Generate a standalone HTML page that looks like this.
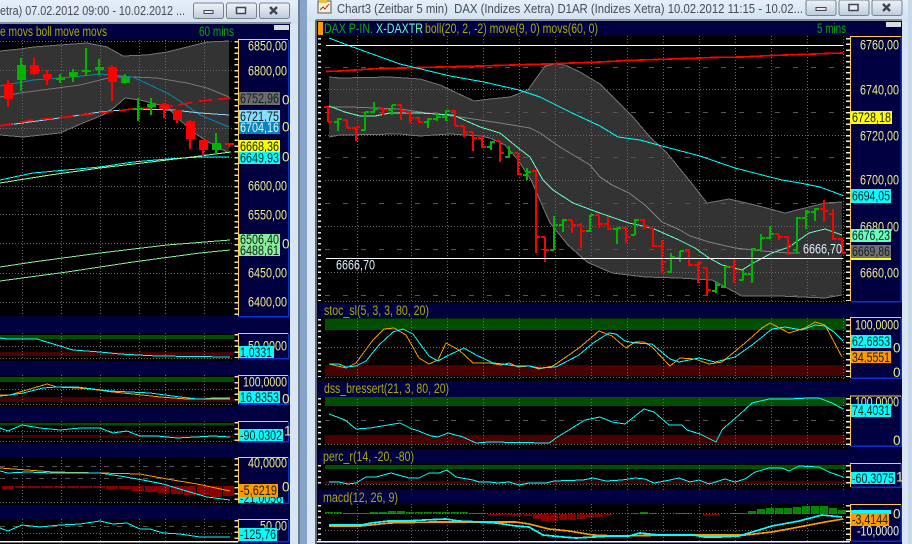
<!DOCTYPE html>
<html><head><meta charset="utf-8"><style>
html,body{margin:0;padding:0;background:#d8e6f4;width:912px;height:544px;overflow:hidden}
svg{display:block}
path{shape-rendering:crispEdges}
text{font-family:"Liberation Sans",Arial,sans-serif;font-size:13.5px;white-space:pre}
.a{fill:#eeee88}.d{fill:#102020}.t{fill:#444c55;font-size:13px}.o{fill:#aaaa00}.g{fill:#00aa00}
.l{fill:none;stroke-width:1}
.w{stroke-width:1.7}
.c{stroke:#00ffff}.r{stroke:#ff9900}.m{stroke:#66ffbb}
</style></head><body>
<svg width="912" height="544" viewBox="0 0 912 544" xmlns="http://www.w3.org/2000/svg">
<defs>
<linearGradient id="tb" x1="0" y1="0" x2="0" y2="1"><stop offset="0" stop-color="#e6eff9"/><stop offset="1" stop-color="#d2e0ef"/></linearGradient>
<linearGradient id="bt" x1="0" y1="0" x2="0" y2="1"><stop offset="0" stop-color="#eef2f7"/><stop offset=".5" stop-color="#d8e0e9"/><stop offset="1" stop-color="#bccbd9"/></linearGradient>
</defs>
<!-- frames -->
<rect width="912" height="544" fill="#d8e6f4"/>
<rect x="0" y="0" width="298" height="24" fill="url(#tb)"/>
<rect x="298" y="0" width="2" height="544" fill="#6d7f92"/>
<rect x="300" y="0" width="7" height="544" fill="#86a4c8"/>
<rect x="307" y="0" width="605" height="21" fill="url(#tb)"/>
<rect x="908" y="0" width="4" height="544" fill="#c9d8ea"/>
<rect x="0" y="22" width="291" height="2" fill="#8a949e"/>
<rect x="316" y="19" width="586" height="2" fill="#7f8a95"/>
<rect x="315" y="20" width="2" height="524" fill="#5c6670"/>
<text class="t" x="0" y="15" textLength="185" lengthAdjust="spacingAndGlyphs">etra) 07.02.2012 09:00 - 10.02.2012 ...</text>
<text class="t" x="337" y="13" textLength="466" lengthAdjust="spacingAndGlyphs">Chart3 (Zeitbar 5 min)  DAX (Indizes Xetra) D1AR (Indizes Xetra) 10.02.2012 11:15 - 10.02...</text>
<!-- title icon -->
<rect x="318" y="1" width="13" height="12" fill="#f5f0d8" stroke="#555"/>
<rect x="319" y="0" width="8" height="3" fill="#e8c040"/>
<path d="M320 10l3-3 2 2 4-5" fill="none" stroke="#d02020"/>
<!-- left buttons -->
<g stroke="#75838f" fill="url(#bt)"><rect x="193.5" y="3" width="30" height="15.5" rx="2"/><rect x="226.5" y="3" width="30" height="15.5" rx="2"/><rect x="259.5" y="3" width="30" height="15.5" rx="2"/>
<rect x="806" y="0" width="30" height="15.5" rx="2"/><rect x="839" y="0" width="30" height="15.5" rx="2"/><rect x="872" y="0" width="30" height="15.5" rx="2"/></g>
<g fill="#e8edf2" stroke="#3c4650"><rect x="204" y="10.5" width="9" height="3"/><rect x="236.5" y="7.5" width="9" height="6" stroke-width="1.5"/><rect x="816" y="7.5" width="10" height="3"/><rect x="849" y="4.5" width="9" height="6" stroke-width="1.5"/></g>
<path d="M270 7l7 7M277 7l-7 7M883 4l7 7M890 4l-7 7" stroke="#3c4650" stroke-width="2.4" fill="none" style="shape-rendering:auto"/>

<!-- left chart -->
<rect x="0" y="24" width="290" height="520" fill="#000040"/>
<rect x="0" y="40" width="238" height="504" fill="#000"/>
<rect x="0" y="24" width="238" height="16" fill="#000040"/>
<rect x="274" y="25" width="15" height="5" fill="#d8dde2"/>
<text class="o" x="0" y="36" textLength="107" lengthAdjust="spacingAndGlyphs">e movs boll move movs</text>
<text class="g" x="199" y="36" textLength="35" lengthAdjust="spacingAndGlyphs">60 mins</text>
<!-- left bands -->
<path d="M0 51L20 49 33 47 60 45 87 43 107 47 123 56 147 55 167 52 187 47 207 42 229 41V153L210 143 193 132 180 120 167 107 140 100 125 98 115 107 103 115 83 123 60 133 23 137 0 135Z" fill="#333"/>
<path d="M0 51L20 49 33 47 60 45 87 43 107 47 123 56 147 55 167 52 187 47 207 42 229 41M229 153L210 143 193 132 180 120 167 107 140 100 125 98 115 107 103 115 83 123 60 133 23 137 0 135" class="l" stroke="#777"/>
<!-- left pane bands -->
<g fill="#004e00"><rect x="0" y="335" width="234" height="4"/><rect x="0" y="377" width="234" height="5"/><rect x="0" y="423" width="234" height="2.5"/></g>
<g fill="#4a0000"><rect x="0" y="352" width="234" height="4"/><rect x="0" y="397" width="234" height="5"/><rect x="0" y="435" width="234" height="3"/></g>
<!-- left hist -->
<path d="M2 486h12v3H2zM15 486h12v2H15zM28 486h12v2H28zM41 486h12v2H41zM54 486h12v2H54zM67 486h12v2H67zM80 486h12v2H80zM93 486h12v2H93zM106 486h12v3H106zM119 486h12v3H119zM132 486h12v5H132zM145 486h12v6H145zM158 486h12v7H158zM171 486h12v8H171zM184 486h12v9H184zM197 486h12v9H197zM210 486h12v11H210zM223 486h11v10H223z" fill="#880000"/>
<!-- left grid -->
<path d="M22.500 40V316M61.500 40V316M100.500 40V316M139.500 40V316M165.500 40V316M204.500 40V316M22.500 333V358M61.500 333V358M100.500 333V358M139.500 333V358M165.500 333V358M204.500 333V358M22.500 375V404M61.500 375V404M100.500 375V404M139.500 375V404M165.500 375V404M204.500 375V404M22.500 421V441M61.500 421V441M100.500 421V441M139.500 421V441M165.500 421V441M204.500 421V441M22.500 457V503M61.500 457V503M100.500 457V503M139.500 457V503M165.500 457V503M204.500 457V503M22.500 519V541M61.500 519V541M100.500 519V541M139.500 519V541M165.500 519V541M204.500 519V541" stroke="#6a6a6a" stroke-dasharray="1 2" fill="none"/>
<path d="M0 41.500H234M0 70.500H234M0 128.500H234M0 157.500H234M0 186.500H234M0 214.500H234M0 243.500H234M0 273.500H234M0 302.500H234M0 358.500H234M0 346.500H234M0 389.500H234M0 404.500H234M0 431.500H234M0 441.500H234M0 502.500H234M0 533.500H234" stroke="#6a6a6a" stroke-dasharray="1 2" fill="none"/>
<path d="M0 466.500H234M0 478.500H234M0 526.500H234" stroke="#555" stroke-dasharray="5 8" fill="none"/>
<g fill="none" stroke="#ddd"><path d="M236.500 41V316M236.500 334V358M236.500 376V404M236.500 422V441M236.500 458V503M236.500 520V541" stroke-width="4" stroke-dasharray="1.500 4.300"/></g>
<!-- left lines -->
<path d="M0 97L20 93 50 89 80 85 100 80 113 77 133 77 157 78 187 83 207 88 229 97" class="l" stroke="#777"/>
<path d="M0 86L33 80 73 77 100 74 133 77 167 93 183 103 200 115 229 127" class="l" stroke="#0088bb"/>
<path d="M0 126L67 117 100 112 133 109 173 110 200 113 229 115" class="l" stroke="#88ddff"/>
<path d="M0 126L33 120 67 117 100 113 133 109 167 107 200 101 230 98" class="l w" stroke="#ff0000" stroke-dasharray="14 6"/>
<path d="M0 180L33 173 100 167 133 162 167 159 200 157 229 157" class="l c"/>
<path d="M0 183L50 175 100 168 167 160 200 156 231 152" class="l" stroke="#99ff99"/>
<path d="M0 267L33 262 100 253 167 245 230 240M0 281L67 272 133 262 200 253 230 250" class="l" stroke="#88ee99"/>
<!-- left candles -->
<g fill="#ff0000">
<rect x="7" y="80" width="2" height="27"/><rect x="4" y="84" width="9" height="15"/>
<rect x="33" y="58" width="2" height="17"/><rect x="30" y="65" width="9" height="9"/>
<rect x="46" y="70" width="2" height="15"/><rect x="43" y="74" width="9" height="5"/>
<rect x="111" y="65" width="2" height="36"/><rect x="108" y="67" width="9" height="15"/>
<rect x="163" y="103" width="2" height="15"/><rect x="160" y="104" width="9" height="5"/>
<rect x="176" y="110" width="2" height="13"/><rect x="173" y="110" width="9" height="10"/>
<rect x="189" y="120" width="2" height="29"/><rect x="186" y="121" width="9" height="18"/>
<rect x="202" y="140" width="2" height="16"/><rect x="199" y="140" width="9" height="10"/>
<rect x="228" y="143" width="2" height="4"/><rect x="225" y="143" width="9" height="2"/>
</g>
<g fill="#00b400">
<rect x="20" y="58" width="2" height="33"/><rect x="17" y="65" width="9" height="15"/>
<rect x="59" y="74" width="2" height="9"/><rect x="56" y="78" width="9" height="2"/>
<rect x="72" y="69" width="2" height="13"/><rect x="69" y="72" width="9" height="5"/>
<rect x="85" y="48" width="2" height="28"/><rect x="82" y="70" width="9" height="2"/>
<rect x="98" y="59" width="2" height="16"/><rect x="95" y="67" width="9" height="3"/>
<rect x="124" y="74" width="2" height="9"/><rect x="121" y="77" width="9" height="6"/>
<rect x="137" y="98" width="2" height="23"/><rect x="134" y="108" width="9" height="2"/>
<rect x="150" y="98" width="2" height="17"/><rect x="147" y="104" width="9" height="3"/>
<rect x="215" y="133" width="2" height="21"/><rect x="212" y="143" width="9" height="7"/>
</g>
<!-- left pane lines -->
<path d="M0 338L7 339 37 339 50 343 73 350 100 352 120 354 157 356 230 357" class="l c"/>
<path d="M0 395L10 395 20 392 47 384 57 387 77 388 90 389 113 392 133 394 160 397 187 399 203 399 213 398 230 398" class="l r"/>
<path d="M0 396L10 395 23 393 43 388 57 387 77 387 93 389 110 391 130 392 150 393 180 397 197 399 213 399 230 399" class="l c"/>
<path d="M0 428L8 431 22 425 40 428 60 430 80 428 100 428 113 433 127 431 140 436 157 436 177 438 213 436 230 437" class="l c"/>
<path d="M0 468L27 470 53 472 100 473 140 474 167 479 197 484 230 491" class="l r"/>
<path d="M0 471L8 473 27 472 53 473 100 473 120 476 143 480 163 484 183 490 207 497 230 500" class="l c"/>
<path d="M0 528L8 531 22 525 40 527 60 525 80 524 100 521 113 524 127 523 140 529 150 529 163 533 180 534 200 537 230 537" class="l c"/>
<!-- left navy bars -->
<g fill="#000040"><rect x="0" y="316" width="238" height="17"/><rect x="0" y="361" width="238" height="14"/><rect x="0" y="407" width="238" height="14"/><rect x="0" y="443" width="238" height="14"/><rect x="0" y="505" width="238" height="14"/></g>
<rect x="0" y="541" width="238" height="1.5" fill="#fff"/>
<!-- left axis boxes -->
<g fill="none" stroke="#0a32d0" stroke-width="1.5"><path d="M238 316.500H288.500V40M238 358.500H288.500V333.500M238 404H288.500V375.500M238 441.500H288.500V421.500M238 503H288.500V457.500M238 541.500H288.500V519.500"/></g>
<g fill="none" stroke="#ffcc44" stroke-width="1.3"><path d="M288 39.500H238.500V316M288 333.500H238.500V358.500M288 375.500H238.500V404M288 421.500H238.500V441.500M288 457.500H238.500V503M288 519.500H238.500V541.500"/></g>
<g class="a">
<text x="248" y="50.500" textLength="39" lengthAdjust="spacingAndGlyphs">6850,00</text>
<text x="248" y="75.500" textLength="39" lengthAdjust="spacingAndGlyphs">6800,00</text>
<text x="282" y="104.500" textLength="6">0</text><text x="282" y="131.500" textLength="6">0</text><text x="282" y="161.500" textLength="6">0</text>
<text x="248" y="190.500" textLength="39" lengthAdjust="spacingAndGlyphs">6600,00</text>
<text x="248" y="219.500" textLength="39" lengthAdjust="spacingAndGlyphs">6550,00</text>
<text x="282" y="248.500" textLength="6">0</text>
<text x="248" y="277.500" textLength="39" lengthAdjust="spacingAndGlyphs">6450,00</text>
<text x="248" y="306.500" textLength="39" lengthAdjust="spacingAndGlyphs">6400,00</text>
<text x="248" y="350.500" textLength="39" lengthAdjust="spacingAndGlyphs">50,0000</text>
<text x="243" y="386.500" textLength="44" lengthAdjust="spacingAndGlyphs">100,0000</text>
<text x="282" y="403.500" textLength="6">0</text>
<text x="284" y="435.500" textLength="3">1</text>
<text x="248" y="467.500" textLength="39" lengthAdjust="spacingAndGlyphs">40,0000</text>
<text x="282" y="491.500" textLength="6">0</text>
<text x="260" y="530.500" textLength="27" lengthAdjust="spacingAndGlyphs">50,00</text>
</g>
<rect x="239" y="92" width="41" height="13" fill="#6c6c6c"/><text class="d" x="240" y="103" textLength="39" lengthAdjust="spacingAndGlyphs">6752,96</text>
<rect x="239" y="110" width="41" height="12" fill="#88ddff"/><text class="d" x="240" y="121" textLength="39" lengthAdjust="spacingAndGlyphs">6721,75</text>
<rect x="239" y="122" width="41" height="12" fill="#0088bb"/><text fill="#eef" x="240" y="132" textLength="39" lengthAdjust="spacingAndGlyphs">6704,16</text>
<rect x="239" y="140" width="41" height="12" fill="#ffff00"/><text class="d" x="240" y="151" textLength="39" lengthAdjust="spacingAndGlyphs">6668,36</text>
<rect x="239" y="152" width="41" height="12" fill="#00ffff"/><text class="d" x="240" y="162.500" textLength="39" lengthAdjust="spacingAndGlyphs">6649,93</text>
<rect x="239" y="234" width="41" height="22" fill="#88ee99"/><text class="d" x="240" y="244" textLength="39" lengthAdjust="spacingAndGlyphs">6506,40</text><text class="d" x="240" y="255" textLength="39" lengthAdjust="spacingAndGlyphs">6488,61</text>
<rect x="239" y="346" width="35" height="12" fill="#00ffff"/><text class="d" x="240" y="357" textLength="32" lengthAdjust="spacingAndGlyphs">1,0331</text>
<rect x="239" y="391" width="41" height="12" fill="#00ffff"/><text class="d" x="240" y="402" textLength="39" lengthAdjust="spacingAndGlyphs">16,8353</text>
<rect x="239" y="429" width="44" height="12" fill="#00ffff"/><text class="d" x="240" y="440" textLength="42" lengthAdjust="spacingAndGlyphs">-90,0302</text>
<rect x="239" y="497" width="44" height="6" fill="#00ffff"/><text class="d" x="240" y="503" textLength="42" lengthAdjust="spacingAndGlyphs">-21,0056</text>
<rect x="239" y="484" width="39" height="13" fill="#ff9900"/><text class="d" x="240" y="495" textLength="37" lengthAdjust="spacingAndGlyphs">-5,6219</text>
<rect x="239" y="528" width="38" height="13" fill="#00ffff"/><text class="d" x="240" y="539" textLength="36" lengthAdjust="spacingAndGlyphs">-125,76</text>

<!-- right chart -->
<rect x="317" y="21" width="585" height="523" fill="#000040"/>
<rect x="317" y="36" width="533" height="505" fill="#000"/>
<rect x="318" y="22" width="5" height="13" fill="#ff9900"/>
<text fill="#00b400" x="324" y="33" textLength="49" lengthAdjust="spacingAndGlyphs">DAX P-IN.</text>
<text fill="#66ffbb" x="376" y="33" textLength="47" lengthAdjust="spacingAndGlyphs">X-DAXTR</text>
<text class="o" x="425" y="33" textLength="173" lengthAdjust="spacingAndGlyphs">boll(20, 2, -2) move(9, 0) movs(60, 0)</text>
<text class="g" x="817" y="33" textLength="29" lengthAdjust="spacingAndGlyphs">5 mins</text>
<rect x="886" y="22" width="15" height="5" fill="#d8dde2"/>
<!-- right pane bands -->
<g fill="#004e00"><rect x="325" y="318.500" width="521" height="11.500"/><rect x="325" y="397" width="521" height="9"/><rect x="325" y="465" width="521" height="4"/></g>
<g fill="#4a0000"><rect x="325" y="365" width="521" height="11"/><rect x="325" y="435" width="521" height="9"/><rect x="325" y="481" width="521" height="3"/></g>
<!-- bollinger -->
<path d="M329 77L340 78 390 77 420 79 440 85 474 101 490 99 510 97 528 90 535 80 545 66 555 64 565 65 580 72 600 84 613 97 633 117 650 137 667 153 689 180 707 203 729 199 755 205 785 213 805 208 825 203 842 202V295L825 298 779 296 742 296 712 280 679 278 645 277 612 273 587 262 568 245 550 223 531 180 518 160 505 145 490 138 480 136 450 134 420 136 400 134 340 135 329 137Z" fill="#333"/>
<path d="M329 77L340 78 390 77 420 79 440 85 474 101 490 99 510 97 528 90 535 80 545 66 555 64 565 65 580 72 600 84 613 97 633 117 650 137 667 153 689 180 707 203 729 199 755 205 785 213 805 208 825 203 842 202M842 295L825 298 779 296 742 296 712 280 679 278 645 277 612 273 587 262 568 245 550 223 531 180 518 160 505 145 490 138 480 136 450 134 420 136 400 134 340 135 329 137" class="l" stroke="#777"/>
<!-- macd hist -->
<path d="M325 512h8v1.500h-8zM334 512h8v1.500h-8zM343 513h60v.8h-60zM370 512h8v1.500h-8zM379 512h8v1.500h-8zM388 511h8v2.500h-8zM397 511h8v2.500h-8zM406 512h8v1.500h-8zM415 512h8v1.500h-8zM424 512h8v1.500h-8zM433 512h8v1.500h-8zM442 512h8v1.500h-8zM451 512h8v1.500h-8zM460 512h8v1.500h-8zM469 513h17v1h-17zM631 513h8v1h-8zM640 512h8v2h-8zM649 513h8v1h-8zM675 513h16v1h-16zM730 513h17v1h-17zM748 511h8v3h-8zM757 509h8v5h-8zM766 508h8v6h-8zM775 508h8v6h-8zM784 508h8v6h-8zM793 507h8v7h-8zM802 506h8v8h-8zM811 506h8v8h-8zM820 506h8v8h-8zM829 508h8v6h-8zM838 510h8v4h-8z" fill="#008800"/>
<path d="M488 514h17v1.500h-17zM506 514h8v1.500h-8zM514 514h8v2h-8zM524 514h8v2h-8zM533 514h8v5h-8zM541 514h8v7h-8zM550 514h8v7h-8zM559 514h8v6h-8zM568 514h8v6h-8zM577 514h8v5h-8zM586 514h8v4h-8zM595 514h8v3h-8zM604 514h8v1.500h-8zM703 514h17v1.500h-17z" fill="#880000"/>
<!-- right grid -->
<path d="M357.500 36V541M411.500 36V541M447.500 36V541M483.500 36V541M519.500 36V541M555.500 36V541M591.500 36V541M627.500 36V541M663.500 36V541M699.500 36V541M735.500 36V541M771.500 36V541M807.500 36V541M843.500 36V541" stroke="#6a6a6a" stroke-dasharray="1 2" fill="none"/>
<path d="M325 89.500H846M325 135.500H846M325 180.500H846M325 226.500H846M325 272.500H846M325 301.500H846M325 347.500H846M325 377.500H846M325 444.500H846M325 484.500H846M325 513.500H846M325 530.500H846" stroke="#6a6a6a" stroke-dasharray="1 2" fill="none"/>
<path d="M325 67.500H846M325 112.500H846M325 157.500H846M325 203.500H846M325 249.500H846M325 295.500H846M325 420.500H846" stroke="#555" stroke-dasharray="5 13" fill="none"/>
<!-- left tick strip / axis ticks -->
<g fill="none" stroke="#e8e8e8"><path d="M319.500 38V301M319.500 319V377M319.500 398V445M319.500 465V485M319.500 505V541" stroke-width="3" stroke-dasharray="1.500 4.200"/><path d="M848 38V301M848 319V377M848 398V445M848 465V485M848 505V541" stroke-width="4" stroke-dasharray="1.500 4.200"/></g>
<!-- lines right -->
<path d="M326 71.500L340 71 370 69 420 67.500 480 66 545 64 600 62 627 60.500 656 59.500 685 58.500 713 57.500 742 57 771 55.500 800 54.500 827 53.500 843 53" class="l w" stroke="#ff0000"/>
<path d="M329 38L350 46 400 64 450 76 484 82 519 90 540 97 570 112 600 126 618 137 640 140 662 146 700 156 735 168 770 177 782 180 800 183 820 187 843 195.500" class="l c"/>
<path d="M329 107L350 107 400 109 420 112 460 117 500 123 530 128 540 133 560 147 590 165 600 177 612 185 629 193 645 205 662 222 680 230 690 236 709 242 735 248 762 251 789 253 800 253" class="l" stroke="#808080"/>
<path d="M329 106L345 112 360 116 375 116 390 113 420 113 453 115 480 127 500 133 517 147 530 157 543 180 553 190 573 203 597 212 620 220 629 223 652 228 679 240 695 248 709 258 722 265 742 270 755 262 772 253 789 247 809 233 825 229 842 235" class="l m"/>
<!-- candles right -->
<path d="M328 106V122M324 107h4M328 122h4M347 120V128M343 120h4M347 128h4M356 127V141M352 128h4M356 127h4M383 108V115M379 109h4M383 110h4M401 104V120M397 105h4M401 111h4M410 112V123M406 112h4M410 118h4M419 117V123M415 118h4M419 122h4M455 110V126M451 111h4M455 126h4M464 126V137M460 126h4M464 132h4M473 132V151M469 132h4M473 138h4M482 135V148M478 138h4M482 147h4M500 141V162M496 141h4M500 153h4M518 153V175M514 153h4M518 174h4M536 170V253M532 171h4M536 237h4M545 237V262M541 237h4M545 250h4M572 220V233M568 220h4M572 225h4M581 223V248M577 225h4M581 231h4M599 215V228M595 215h4M599 224h4M608 217V230M604 224h4M608 229h4M626 227V243M622 228h4M626 237h4M644 219V229M640 220h4M644 226h4M653 228V247M649 228h4M653 246h4M662 240V273M658 246h4M662 262h4M689 251V266M685 251h4M689 265h4M698 262V283M694 265h4M698 263h4M707 268V296M703 268h4M707 290h4M734 259V283M730 267h4M734 270h4M779 235V240M775 234h4M779 237h4M788 236V255M784 237h4M788 245h4M824 200V222M820 209h4M824 211h4M833 209V240M829 214h4M833 239h4M842 238V253M838 239h4M842 253h4" fill="none" stroke="#ff0000" stroke-width="2"/>
<path d="M338 118V131M334 122h4M338 119h4M365 112V130M361 130h4M365 112h4M374 102V113M370 112h4M374 109h4M392 105V115M388 110h4M392 105h4M428 118V128M424 122h4M428 119h4M437 113V121M433 119h4M437 117h4M446 110V121M442 117h4M446 111h4M491 141V150M487 147h4M491 142h4M509 146V157M505 157h4M509 153h4M527 168V180M523 175h4M527 172h4M554 216V250M550 250h4M554 225h4M563 219V232M559 225h4M563 220h4M590 215V232M586 231h4M590 215h4M617 228V244M613 229h4M617 228h4M635 219V235M631 235h4M635 220h4M671 253V273M667 272h4M671 257h4M680 251V262M676 258h4M680 251h4M716 282V293M712 291h4M716 285h4M725 266V288M721 287h4M725 267h4M743 270V280M739 280h4M743 274h4M752 248V283M748 274h4M752 249h4M761 234V250M757 250h4M761 238h4M770 226V239M766 238h4M770 234h4M797 217V253M793 250h4M797 218h4M806 210V229M802 218h4M806 212h4M815 208V221M811 212h4M815 209h4" fill="none" stroke="#00b400" stroke-width="2"/>
<path d="M326 45.500H843M326 258.500H843" stroke="#fff" fill="none"/>
<text fill="#ddeeff" x="336" y="269.500" textLength="39" lengthAdjust="spacingAndGlyphs">6666,70</text>
<text fill="#ddeeff" x="803" y="253.500" textLength="39" lengthAdjust="spacingAndGlyphs">6666,70</text>
<!-- stoc -->
<path d="M329 364L346 368 356 363 373 340 384 329 394 328 406 335 419 358 429 364 438 360 446 343 459 350 473 363 489 363 501 365 509 363 518 367 529 366 539 369 553 366 579 348 599 331 612 336 626 348 635 342 644 342 652 347 670 366 680 358 695 359 709 364 722 362 745 343 762 328 770 323 789 333 805 328 815 322 825 325 842 357" class="l r"/>
<path d="M329 364L339 364 346 367 356 366 366 361 379 345 393 332 403 329 413 334 429 356 438 361 449 355 464 348 476 355 493 363 503 364 516 366 529 366 539 368 556 367 579 355 593 343 609 333 616 334 625 341 635 343 652 344 670 359 679 362 699 358 715 362 735 357 752 345 772 329 785 327 802 330 815 325 825 326 834 332 843 341" class="l c"/>
<!-- dss -->
<path d="M329 414L345 420 356 429 370 428 400 423 412 429 416 430 431 436 438 437 448 433 463 437 476 443 489 442 549 443 559 436 569 430 585 420 600 417 612 422 625 424 644 409 654 412 669 425 682 425 687 430 700 434 716 442 722 430 725 427 739 415 752 403 769 399 789 399 809 398 819 398 832 403 843 409" class="l c"/>
<!-- perc -->
<path d="M329 482L339 482 348 484 356 483 366 477 376 477 391 473 409 478 419 478 429 473 439 473 447 470 456 477 473 480 479 482 489 482 498 483 509 482 519 485 529 483 546 483 554 481 583 480 593 478 606 481 622 480 635 478 645 479 654 483 665 481 679 478 690 482 699 480 709 484 725 479 735 482 745 479 755 472 769 468 782 468 789 471 799 466 819 467 829 472 843 477" class="l c"/>
<!-- macd -->
<path d="M329 526L361 526 389 523 433 522 476 522 516 522 529 524 549 529 569 531 593 535 616 536 675 535 745 535 772 532 799 527 825 522 843 519" class="l r w"/>
<path d="M329 525L361 525 371 523 388 521 406 521 424 520 446 519 459 521 481 522 496 523 516 526 529 527 543 535 563 537 576 538 612 536 629 536 640 533 659 535 694 535 704 537 720 537 739 536 749 533 772 526 799 521 822 515 842 517" class="l c w"/>
<!-- navy bars right -->
<g fill="#000040"><rect x="317" y="303" width="533" height="15"/><rect x="317" y="381" width="533" height="16"/><rect x="317" y="449" width="533" height="15"/><rect x="317" y="490" width="533" height="14"/></g>
<text class="o" x="324" y="315" textLength="105" lengthAdjust="spacingAndGlyphs">stoc_sl(5, 3, 3, 80, 20)</text>
<text class="o" x="324" y="393" textLength="125" lengthAdjust="spacingAndGlyphs">dss_bressert(21, 3, 80, 20)</text>
<text class="o" x="323" y="461" textLength="91" lengthAdjust="spacingAndGlyphs">perc_r(14, -20, -80)</text>
<text class="o" x="323" y="502" textLength="75" lengthAdjust="spacingAndGlyphs">macd(12, 26, 9)</text>
<rect x="317" y="541" width="533" height="1.500" fill="#fff"/>
<!-- right axis boxes -->
<g fill="none" stroke="#0a32d0" stroke-width="1.500"><path d="M851 301.500H901V36M851 378H901V317.500M851 446H901V396M851 487H901V463.500M851 541H901V504.500"/></g>
<g fill="none" stroke="#ffcc44" stroke-width="1.300"><path d="M901 36.500H850.500V301M901 317.500H850.500V378M901 396H850.500V446M901 463.500H850.500V487M901 504.500H850.500V541"/></g>
<g class="a">
<text x="860" y="49.500" textLength="39" lengthAdjust="spacingAndGlyphs">6760,00</text>
<text x="860" y="94.500" textLength="39" lengthAdjust="spacingAndGlyphs">6740,00</text>
<text x="860" y="140.500" textLength="39" lengthAdjust="spacingAndGlyphs">6720,00</text>
<text x="860" y="184.500" textLength="39" lengthAdjust="spacingAndGlyphs">6700,00</text>
<text x="860" y="231.500" textLength="39" lengthAdjust="spacingAndGlyphs">6680,00</text>
<text x="860" y="277.500" textLength="39" lengthAdjust="spacingAndGlyphs">6660,00</text>
<text x="855" y="329.500" textLength="44" lengthAdjust="spacingAndGlyphs">100,0000</text>
<text x="893" y="352.500" textLength="6">0</text>
<text x="893" y="377" textLength="6">0</text>
<text x="855" y="406.500" textLength="44" lengthAdjust="spacingAndGlyphs">100,0000</text>
<text x="893" y="445" textLength="6">0</text>
<text x="896" y="481.500" textLength="3">1</text>
<text x="893" y="518.500" textLength="6">0</text>
</g>
<text fill="#f0f4e0" x="857" y="535.500" textLength="42" lengthAdjust="spacingAndGlyphs">-10,0000</text>
<rect x="850" y="111" width="42" height="13" fill="#ffff00"/><text class="d" x="852" y="122" textLength="39" lengthAdjust="spacingAndGlyphs">6728,18</text>
<rect x="851" y="189" width="40" height="14" fill="#00ffff"/><text class="d" x="852" y="200.500" textLength="38" lengthAdjust="spacingAndGlyphs">6694,05</text>
<rect x="851" y="229" width="40" height="13" fill="#66ffbb"/><text class="d" x="852" y="240" textLength="38" lengthAdjust="spacingAndGlyphs">6676,23</text>
<rect x="851" y="245" width="40" height="13" fill="#707070"/><text class="d" x="852" y="256" textLength="38" lengthAdjust="spacingAndGlyphs">6669,86</text>
<rect x="851" y="258" width="40" height="2" fill="#ffff00"/>
<rect x="851" y="335" width="40" height="13" fill="#00ffff"/><text class="d" x="852" y="346" textLength="38" lengthAdjust="spacingAndGlyphs">62,6853</text>
<rect x="851" y="351" width="40" height="12" fill="#ff9900"/><text class="d" x="852" y="362" textLength="38" lengthAdjust="spacingAndGlyphs">34,5551</text>
<rect x="851" y="404" width="40" height="13" fill="#00ffff"/><text class="d" x="852" y="415" textLength="38" lengthAdjust="spacingAndGlyphs">74,4031</text>
<rect x="851" y="472" width="44" height="12" fill="#00ffff"/><text class="d" x="852" y="483" textLength="42" lengthAdjust="spacingAndGlyphs">-60,3075</text>
<rect x="851" y="510" width="40" height="4" fill="#00ffff"/>
<rect x="851" y="513" width="38" height="13" fill="#ff9900"/><text class="d" x="852" y="524" textLength="36" lengthAdjust="spacingAndGlyphs">-3,4144</text>
</svg>
</body></html>
